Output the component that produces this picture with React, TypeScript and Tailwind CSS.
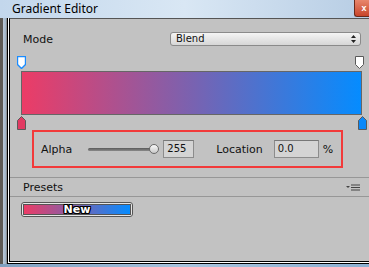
import React from "react";

const GRADIENT = "linear-gradient(to right, #ec3c66, #7a62b0 50%, #058cff)";

function TopMarker({selected}: {selected?: boolean}) {
    return (
        <svg width="9" height="13" viewBox="0 0 9 13">
            <path d="M0.5 0.5 H8.5 V8.5 L4.5 12.5 L0.5 8.5 Z" fill="#fff"
                  stroke={selected ? "#1a8cff" : "#5a5a5a"} strokeWidth={selected ? 1.4 : 1}/>
        </svg>
    );
}

function BottomMarker({color}: {color: string}) {
    return (
        <svg width="9" height="14" viewBox="0 0 9 14">
            <path d="M4.5 0.5 L8.5 4.5 V13.5 H0.5 V4.5 Z" fill={color} stroke="#5a5a5a" strokeWidth="1"/>
        </svg>
    );
}

export default function App() {
    return (
        <div className="w-[369px] h-[267px] overflow-hidden flex flex-col bg-[#5a5855] font-['DejaVu_Sans',sans-serif] text-[#111]">
            {/* title bar */}
            <div className="h-[18px] flex items-center bg-gradient-to-r from-[#c3d7ec] via-[#d9e7f4] to-[#b7cde4]">
                <span className="pl-[12px] text-[12px] leading-none text-black font-['Noto_Sans',sans-serif]">Gradient Editor</span>
                <div className="ml-auto self-start h-[17px] w-[15px] rounded-bl-[3px] border-l border-b border-[#6b2a1c] bg-gradient-to-b from-[#e8866c] to-[#c8442a] flex items-center justify-center">
                    <span className="text-white text-[9px] font-bold leading-none ml-[4px] font-['Liberation_Sans',sans-serif]">x</span>
                </div>
            </div>

            <div className="flex flex-1">
                <div className="w-[3px] bg-[#5d5a56]"/>
                <div className="w-[3px] bg-gradient-to-r from-[#bccbda] to-[#9db1c5]"/>
                <div className="w-px bg-[#8a8f94]"/>
                <div className="flex-1 flex flex-col border-l border-b border-black">
                    <div className="flex-1 flex flex-col border-l border-b border-white">
                        <div className="flex-1 flex flex-col border-l border-b border-t border-l-black border-b-black border-t-[#555] bg-[#c2c2c2]">
                            {/* mode */}
                            <div className="mt-[13px] h-[14px] flex items-center justify-between pl-[13px] pr-[8px]">
                                <span className="text-[11px] leading-none">Mode</span>
                                <div className="w-[191px] h-[14px] rounded-[3px] border border-[#8a8a8a] bg-gradient-to-b from-[#f4f4f4] to-[#d6d6d6] flex items-center pl-[5px] pr-[4px]">
                                    <span className="text-[10px] leading-none">Blend</span>
                                    <svg className="ml-auto" width="5" height="8" viewBox="0 0 5 8">
                                        <path d="M2.5 0 L5 3 H0 Z M2.5 8 L5 5 H0 Z" fill="#222"/>
                                    </svg>
                                </div>
                            </div>

                            {/* top markers */}
                            <div className="mt-[10px] h-[15px] relative">
                                <div className="absolute left-[7px] top-0"><TopMarker selected/></div>
                                <div className="absolute left-[345px] top-0"><TopMarker/></div>
                            </div>

                            {/* gradient bar */}
                            <div className="ml-[11px] w-[341px] h-[44px] border border-[#666]"
                                 style={{background: GRADIENT}}/>

                            {/* bottom markers */}
                            <div className="h-[15px] relative">
                                <div className="absolute left-[7px] top-[1px]"><BottomMarker color="#e23a62"/></div>
                                <div className="absolute left-[348px] top-[1px]"><BottomMarker color="#0a88f8"/></div>
                            </div>

                            {/* alpha / location */}
                            <div className="ml-[22px] w-[311px] h-[38px] border-2 border-[#f23a3a] flex items-center pl-[7px]">
                                <span className="text-[11px] leading-none">Alpha</span>
                                <div className="ml-[16px] w-[71px] h-[12px] relative flex items-center">
                                    <div className="w-[66px] h-[3px] rounded-full bg-gradient-to-b from-[#5a5a5a] to-[#8a8a8a]"/>
                                    <div className="absolute right-0 top-[1px] w-[10px] h-[10px] rounded-full border border-[#6a6a6a] bg-gradient-to-b from-[#fafafa] to-[#c8c8c8]"/>
                                </div>
                                <div className="ml-[4px] w-[31px] h-[18px] border border-[#8c8c8c] border-t-[#777] bg-[#d4d4d4] flex items-center pl-[3px]">
                                    <span className="text-[10px] leading-none">255</span>
                                </div>
                                <span className="ml-[22px] text-[11px] leading-none">Location</span>
                                <div className="ml-[11px] w-[45px] h-[18px] border border-[#8c8c8c] border-t-[#777] bg-[#d4d4d4] flex items-center pl-[3px]">
                                    <span className="text-[10px] leading-none">0.0</span>
                                </div>
                                <span className="ml-[4px] text-[11px] leading-none">%</span>
                            </div>

                            <div className="mt-[9px] h-px bg-[#979797]"/>
                            {/* presets header */}
                            <div className="h-[18px] flex items-center justify-between pl-[13px] pr-[9px]">
                                <span className="text-[11px] leading-none">Presets</span>
                                <svg width="14" height="7" viewBox="0 0 14 7">
                                    <path d="M0 2 H4 L2 4 Z" fill="#444"/>
                                    <path d="M5 1 H14 M5 3.5 H14 M5 6 H14" stroke="#444" strokeWidth="1.2"/>
                                </svg>
                            </div>
                            <div className="h-px bg-[#979797]"/>

                            {/* preset swatch */}
                            <div className="mt-[5px] ml-[11px] w-[112px] h-[15px] rounded-[3px] border border-[#555] bg-[#e6e6e6] p-px">
                                <div className="w-full h-full border border-[#555] flex items-center justify-center"
                                     style={{background: GRADIENT}}>
                                    <span className="text-[11px] font-bold leading-none text-white [text-shadow:1px_0_0_#000,-1px_0_0_#000,0_1px_0_#000,0_-1px_0_#000,1px_1px_0_#000,-1px_-1px_0_#000,1px_-1px_0_#000,-1px_1px_0_#000]">New</span>
                                </div>
                            </div>
                        </div>
                    </div>
                </div>
            </div>

            {/* bottom frame */}
            <div className="h-[3px] bg-gradient-to-r from-[#7fa0c0] via-[#a9c4de] to-[#8cb0d2]"/>
        </div>
    );
}
